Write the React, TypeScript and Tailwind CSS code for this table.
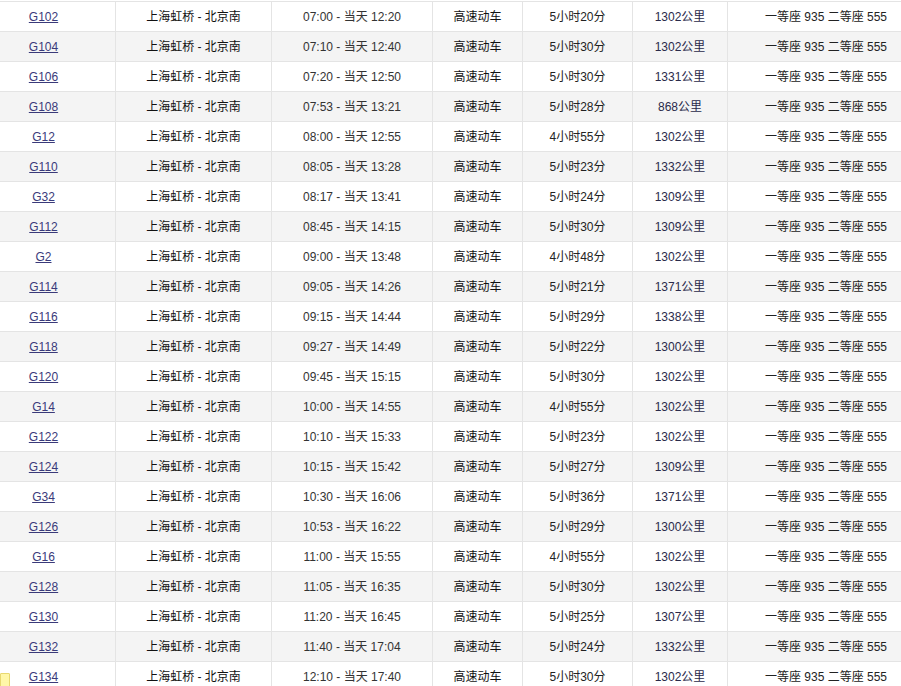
import React from "react";

const rows: [string, string, string, string, string][] = [
  ["G102", "07:00", "12:20", "5小时20分", "1302"],
  ["G104", "07:10", "12:40", "5小时30分", "1302"],
  ["G106", "07:20", "12:50", "5小时30分", "1331"],
  ["G108", "07:53", "13:21", "5小时28分", "868"],
  ["G12", "08:00", "12:55", "4小时55分", "1302"],
  ["G110", "08:05", "13:28", "5小时23分", "1332"],
  ["G32", "08:17", "13:41", "5小时24分", "1309"],
  ["G112", "08:45", "14:15", "5小时30分", "1309"],
  ["G2", "09:00", "13:48", "4小时48分", "1302"],
  ["G114", "09:05", "14:26", "5小时21分", "1371"],
  ["G116", "09:15", "14:44", "5小时29分", "1338"],
  ["G118", "09:27", "14:49", "5小时22分", "1300"],
  ["G120", "09:45", "15:15", "5小时30分", "1302"],
  ["G14", "10:00", "14:55", "4小时55分", "1302"],
  ["G122", "10:10", "15:33", "5小时23分", "1302"],
  ["G124", "10:15", "15:42", "5小时27分", "1309"],
  ["G34", "10:30", "16:06", "5小时36分", "1371"],
  ["G126", "10:53", "16:22", "5小时29分", "1300"],
  ["G16", "11:00", "15:55", "4小时55分", "1302"],
  ["G128", "11:05", "16:35", "5小时30分", "1302"],
  ["G130", "11:20", "16:45", "5小时25分", "1307"],
  ["G132", "11:40", "17:04", "5小时24分", "1332"],
  ["G134", "12:10", "17:40", "5小时30分", "1302"],
];

export default function App() {
  return (
    <div
      className="relative w-[901px] h-[686px] overflow-hidden bg-white text-[12px] text-[#333]"
      style={{ fontFamily: '"Liberation Sans", Arial, "Noto Sans CJK SC", sans-serif' }}
    >
      <div className="mt-[1px] ml-[-28px] w-[952px] border-t border-[#e4e4e4]">
        {rows.map((r, i) => (
          <div
            key={r[0]}
            className={`grid grid-cols-[144px_156px_161px_90px_110px_95px_196px] h-[30px] border-b border-[#e4e4e4] ${
              i % 2 === 1 ? "bg-[#f4f4f4]" : "bg-white"
            }`}
          >
            <div className="flex items-center justify-center pt-[1px] border-r border-[#e4e4e4]">
              <a href="#" className="underline text-[#3a3a7a]">{r[0]}</a>
            </div>
            <div className="flex items-center justify-center pt-[1px] border-r border-[#e4e4e4] text-[#111]">上海虹桥 - 北京南</div>
            <div className="flex items-center justify-center pt-[1px] border-r border-[#e4e4e4] text-[#333]">
              {r[1]} - 当天 {r[2]}
            </div>
            <div className="flex items-center justify-center pt-[1px] border-r border-[#e4e4e4] text-[#111]">高速动车</div>
            <div className="flex items-center justify-center pt-[1px] border-r border-[#e4e4e4] text-[#222]">{r[3]}</div>
            <div className="flex items-center justify-center pt-[1px] border-r border-[#e4e4e4] text-[#2a2a4a]">{r[4]}公里</div>
            <div className="flex items-center justify-center pt-[1px] text-[#222]">一等座 935 二等座 555</div>
          </div>
        ))}
      </div>
      <div className="absolute left-0 top-[673px] w-[10px] h-[14px] bg-[#fff7a8] border border-[#e8d870] rounded-[1px]" />
    </div>
  );
}
